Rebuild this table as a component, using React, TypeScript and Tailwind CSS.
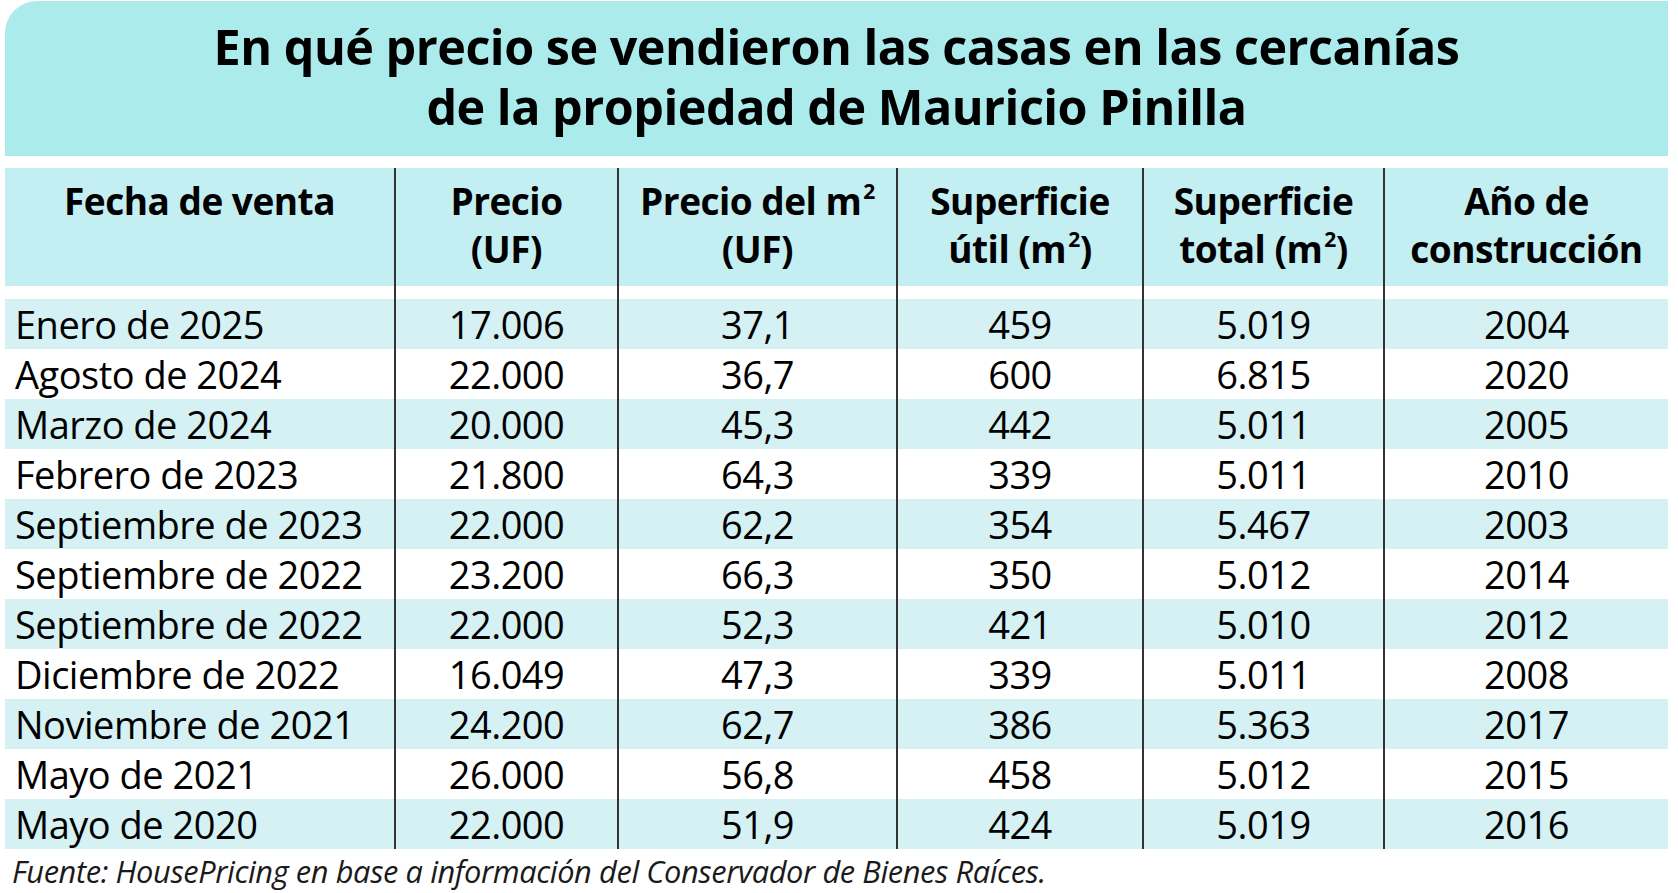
const rows: string[][] = [
  ["Enero de 2025", "17.006", "37,1", "459", "5.019", "2004"],
  ["Agosto de 2024", "22.000", "36,7", "600", "6.815", "2020"],
  ["Marzo de 2024", "20.000", "45,3", "442", "5.011", "2005"],
  ["Febrero de 2023", "21.800", "64,3", "339", "5.011", "2010"],
  ["Septiembre de 2023", "22.000", "62,2", "354", "5.467", "2003"],
  ["Septiembre de 2022", "23.200", "66,3", "350", "5.012", "2014"],
  ["Septiembre de 2022", "22.000", "52,3", "421", "5.010", "2012"],
  ["Diciembre de 2022", "16.049", "47,3", "339", "5.011", "2008"],
  ["Noviembre de 2021", "24.200", "62,7", "386", "5.363", "2017"],
  ["Mayo de 2021", "26.000", "56,8", "458", "5.012", "2015"],
  ["Mayo de 2020", "22.000", "51,9", "424", "5.019", "2016"],
];

const grid =
  "grid grid-cols-[389px_223px_279px_246px_241px_285px] w-[1663px] ml-[5px]";
const divider = "border-l-2 border-[#333333]";

function Sup() {
  return (
    <span className="relative top-[-16px] ml-[2px] text-[21px] leading-none">
      2
    </span>
  );
}

export default function App() {
  return (
    <div className="w-[1678px] h-[893px] bg-white text-black font-['Open_Sans',sans-serif] overflow-hidden">
      {/* Title */}
      <div className="mt-[1px] ml-[5px] w-[1663px] h-[155px] rounded-tl-[32px] bg-[#abebec] pt-[15px] text-center text-[48.5px] font-bold leading-[60px] tracking-[-0.5px]">
        <div>En qué precio se vendieron las casas en las cercanías</div>
        <div>de la propiedad de Mauricio Pinilla</div>
      </div>

      {/* Header */}
      <div className={`${grid} mt-[12px] h-[118px] bg-[#c3eef2] text-center text-[37px] font-bold leading-[48px] tracking-[-0.5px]`}>
        <div className="pt-[9px]">Fecha de venta</div>
        <div className={`${divider} pt-[9px]`}>
          Precio
          <br />
          (UF)
        </div>
        <div className={`${divider} pt-[9px]`}>
          Precio del m<Sup />
          <br />
          (UF)
        </div>
        <div className={`${divider} pt-[9px]`}>
          Superficie
          <br />
          útil (m<Sup />)
        </div>
        <div className={`${divider} pt-[9px]`}>
          Superficie
          <br />
          total (m<Sup />)
        </div>
        <div className={`${divider} pt-[9px]`}>
          Año de
          <br />
          construcción
        </div>
      </div>

      {/* spacer keeps the column rules running */}
      <div className={`${grid} h-[13px]`}>
        <div />
        <div className={divider} />
        <div className={divider} />
        <div className={divider} />
        <div className={divider} />
        <div className={divider} />
      </div>

      {/* Body */}
      {rows.map((r, i) => (
        <div
          key={i}
          className={`${grid} h-[50px] text-[38px] leading-[50px] tracking-[-0.5px] ${
            i % 2 === 0 ? "bg-[#d5f1f3]" : "bg-white"
          }`}
        >
          <div className="pl-[10px] whitespace-nowrap">{r[0]}</div>
          {r.slice(1).map((c, j) => (
            <div key={j} className={`${divider} text-center`}>
              {c}
            </div>
          ))}
        </div>
      ))}

      {/* Source */}
      <div className="pl-[12px] pt-[3px] text-[30.8px] italic leading-[38px] text-[#1a1a1a] tracking-[-0.4px] whitespace-nowrap">
        Fuente: HousePricing en base a información del Conservador de Bienes Raíces.
      </div>
    </div>
  );
}
